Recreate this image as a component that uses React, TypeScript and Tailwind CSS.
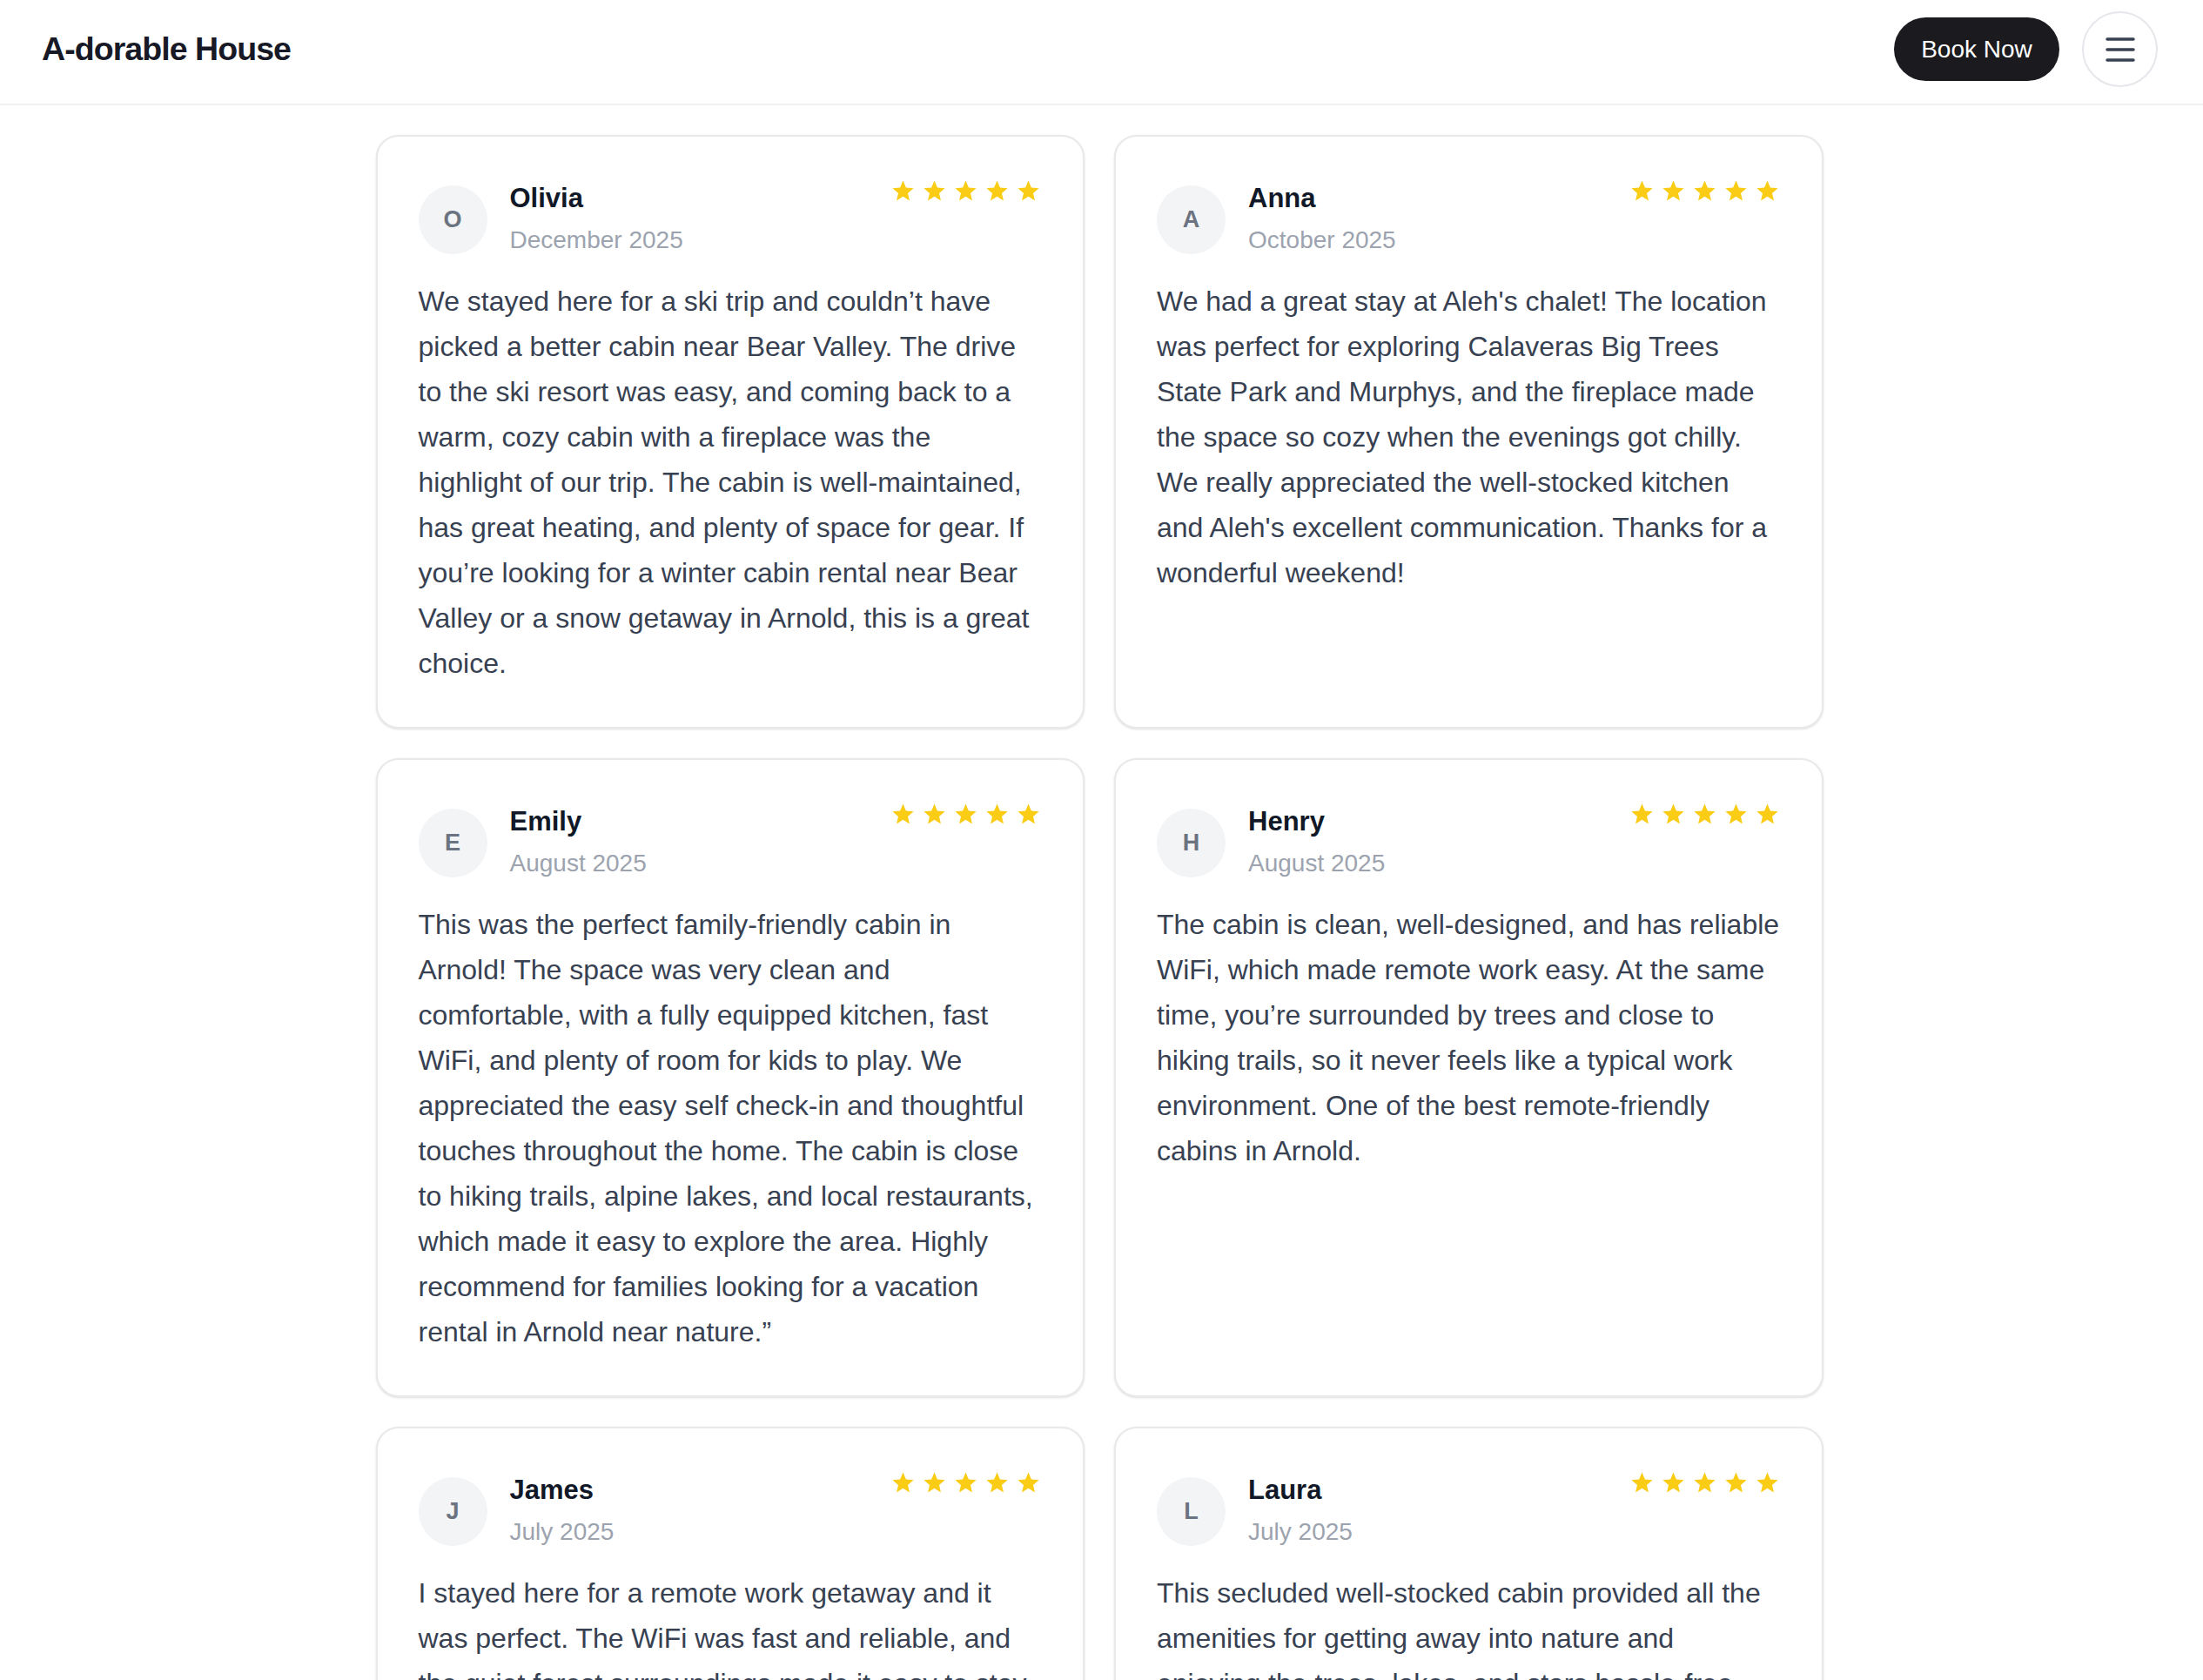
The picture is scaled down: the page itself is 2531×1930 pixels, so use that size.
import React from "react";

type Review = {
  name: string;
  date: string;
  lines: string[];
};

const reviews: Review[] = [
  {
    name: "Olivia",
    date: "December 2025",
    lines: [
      "We stayed here for a ski trip and couldn’t have",
      "picked a better cabin near Bear Valley. The drive",
      "to the ski resort was easy, and coming back to a",
      "warm, cozy cabin with a fireplace was the",
      "highlight of our trip. The cabin is well-maintained,",
      "has great heating, and plenty of space for gear. If",
      "you’re looking for a winter cabin rental near Bear",
      "Valley or a snow getaway in Arnold, this is a great",
      "choice.",
    ],
  },
  {
    name: "Anna",
    date: "October 2025",
    lines: [
      "We had a great stay at Aleh's chalet! The location",
      "was perfect for exploring Calaveras Big Trees",
      "State Park and Murphys, and the fireplace made",
      "the space so cozy when the evenings got chilly.",
      "We really appreciated the well-stocked kitchen",
      "and Aleh's excellent communication. Thanks for a",
      "wonderful weekend!",
    ],
  },
  {
    name: "Emily",
    date: "August 2025",
    lines: [
      "This was the perfect family-friendly cabin in",
      "Arnold! The space was very clean and",
      "comfortable, with a fully equipped kitchen, fast",
      "WiFi, and plenty of room for kids to play. We",
      "appreciated the easy self check-in and thoughtful",
      "touches throughout the home. The cabin is close",
      "to hiking trails, alpine lakes, and local restaurants,",
      "which made it easy to explore the area. Highly",
      "recommend for families looking for a vacation",
      "rental in Arnold near nature.”",
    ],
  },
  {
    name: "Henry",
    date: "August 2025",
    lines: [
      "The cabin is clean, well-designed, and has reliable",
      "WiFi, which made remote work easy. At the same",
      "time, you’re surrounded by trees and close to",
      "hiking trails, so it never feels like a typical work",
      "environment. One of the best remote-friendly",
      "cabins in Arnold.",
    ],
  },
  {
    name: "James",
    date: "July 2025",
    lines: [
      "I stayed here for a remote work getaway and it",
      "was perfect. The WiFi was fast and reliable, and",
      "the quiet forest surroundings made it easy to stay",
      "focused during the day and unwind at night.",
    ],
  },
  {
    name: "Laura",
    date: "July 2025",
    lines: [
      "This secluded well-stocked cabin provided all the",
      "amenities for getting away into nature and",
      "enjoying the trees, lakes, and stars hassle-free.",
    ],
  },
];

function Star() {
  return (
    <svg viewBox="0 0 24 24" className="w-[29px] h-[29px]" fill="#facc15">
      <path d="M12 17.27L18.18 21l-1.64-7.03L22 9.24l-7.19-.61L12 2 9.19 8.63 2 9.24l5.46 4.73L5.82 21z" />
    </svg>
  );
}

function ReviewCard({ review }: { review: Review }) {
  return (
    <div className="rounded-[26px] border-2 border-[#e8e9eb] bg-white shadow-sm px-[47px] pt-[48px] pb-[47px]">
      {/* header: avatar, name, rating */}
      <div className="flex items-start justify-between">
        <div className="flex items-center gap-[26px]">
          <div className="w-[79px] h-[79px] rounded-full bg-[#f3f4f6] flex items-center justify-center text-[27px] font-bold text-[#6b7280]">
            {review.name[0]}
          </div>
          <div className="flex flex-col">
            <span className="text-[31px] leading-[45px] font-bold text-[#111827]">{review.name}</span>
            <span className="mt-[3px] text-[28px] leading-[46px] text-[#9ca3af]">{review.date}</span>
          </div>
        </div>
        <div className="flex items-center gap-[7px] pr-[1px]">
          {[0, 1, 2, 3, 4].map((i) => (
            <Star key={i} />
          ))}
        </div>
      </div>

      {/* body */}
      <p className="mt-[21px] text-[32px] leading-[52px] text-[#374151]">
        {review.lines.map((line, i) => (
          <span key={i} className="block whitespace-nowrap">
            {line}
          </span>
        ))}
      </p>
    </div>
  );
}

export default function App() {
  return (
    <div className="h-screen overflow-hidden bg-white flex flex-col font-['Liberation_Sans',Arial,sans-serif]">
      <header className="flex items-center justify-between pl-[48px] pr-[52px] pt-[13px] pb-[19px] border-b-2 border-[#f1f2f4] bg-white">
        <h1 className="text-[37.5px] font-bold tracking-tight text-[#171a26]">A-dorable House</h1>
        <div className="flex items-center gap-[26px]">
          <button className="h-[73px] w-[190px] rounded-full bg-[#1a1a1f] text-white text-[28px]">
            Book Now
          </button>
          <button className="w-[87px] h-[87px] rounded-full border-2 border-[#e5e7eb] flex items-center justify-center">
            <svg width="34" height="30" viewBox="0 0 34 30" fill="none" stroke="#374151" strokeWidth="3.5" strokeLinecap="round">
              <line x1="2" y1="3" x2="32" y2="3" />
              <line x1="2" y1="15" x2="32" y2="15" />
              <line x1="2" y1="27" x2="32" y2="27" />
            </svg>
          </button>
        </div>
      </header>

      <main className="flex-1 overflow-hidden">
        <div className="w-[1663px] ml-[calc(50%-834px)] pt-[34px] grid grid-cols-2 gap-[34px]">
          {reviews.map((r) => (
            <ReviewCard key={r.name} review={r} />
          ))}
        </div>
      </main>
    </div>
  );
}
